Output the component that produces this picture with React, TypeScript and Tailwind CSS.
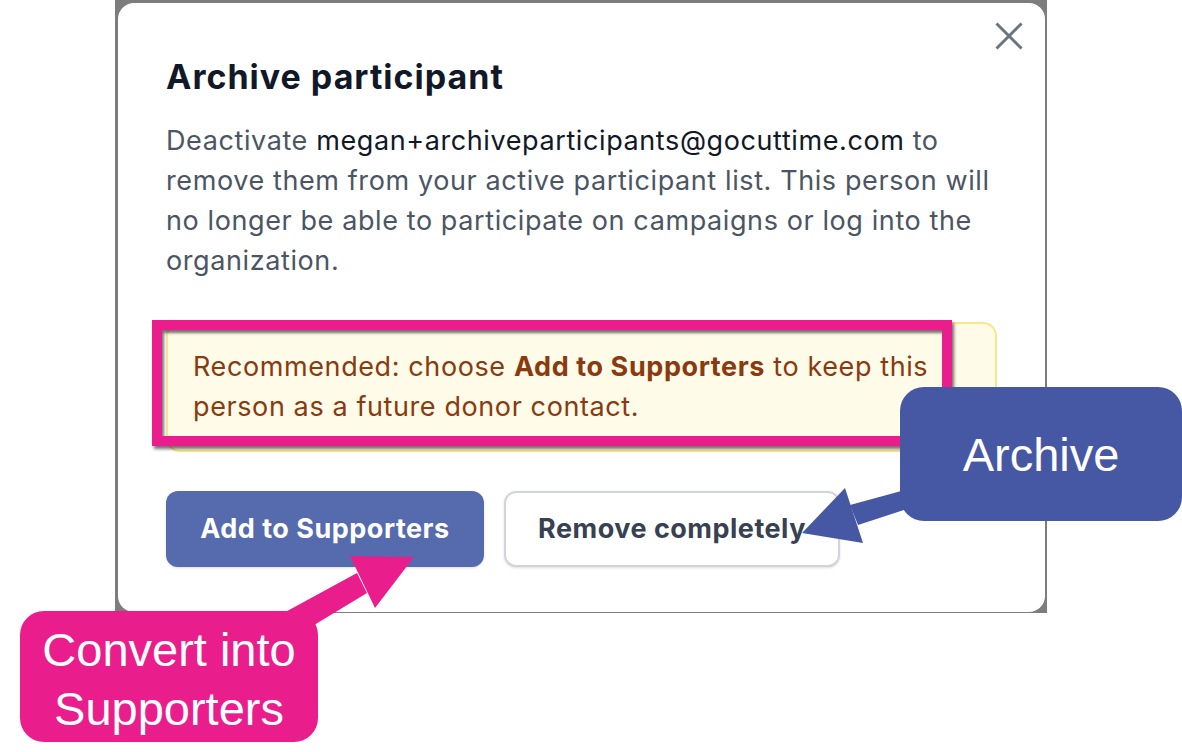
import React from 'react';

const Callout: React.FC<{ className: string; children: React.ReactNode }> = ({ className, children }) => (
  <div
    className={`absolute flex items-center justify-center text-center text-white text-[47px] leading-[59px] font-['Liberation_Sans',Arial,sans-serif] ${className}`}
  >
    {children}
  </div>
);

const App: React.FC = () => {
  return (
    <div className="relative w-[1182px] h-[752px] bg-white overflow-hidden font-['Inter','Noto_Sans',sans-serif]">
      {/* Backdrop with dialog */}
      <div className="ml-[115px] w-[932px] h-[613px] bg-[#7d7d7d] pt-[3px] pl-[3px] pr-[2px] pb-[1px]">
        <div className="relative h-full bg-white rounded-[16px] px-[48px] pt-[54px]">
          <button className="absolute top-[19px] right-[22px] text-[#6b7280]">
            <svg width="28" height="28" viewBox="0 0 28 28" fill="none" stroke="currentColor" strokeWidth="3">
              <path d="M1.5 1.5 L26.5 26.5 M26.5 1.5 L1.5 26.5" />
            </svg>
          </button>

          <h2 className="text-[34px] leading-[40px] tracking-[1px] font-bold text-[#111827] mb-[24px]">
            Archive participant
          </h2>
          <p className="text-[27px] leading-[40px] tracking-[0.6px] text-[#4b5563]">
            Deactivate <span className="text-[#111827]">megan+archiveparticipants@gocuttime.com</span> to remove them
            from your active participant list. This person will no longer be able to participate on campaigns or log
            into the organization.
          </p>

          <div className="mt-[41px] rounded-[14px] border-2 border-[#fde68a] bg-[#fefbe9] px-[25px] py-[23px] text-[27px] leading-[40px] tracking-[0.6px] text-[#8a3a0e]">
            Recommended: choose <span className="font-bold">Add to Supporters</span> to keep this person as a future
            donor contact.
          </div>

          <div className="mt-[39px] flex gap-[20px] text-[27px] tracking-[0.5px] font-bold">
            <button className="w-[318px] h-[76px] flex items-center justify-center rounded-[12px] bg-[#566bad] text-white shadow-sm">
              Add to Supporters
            </button>
            <button className="w-[336px] h-[76px] flex items-center justify-center rounded-[12px] border-2 border-[#d1d5db] bg-white text-[#374151] shadow-sm">
              Remove completely
            </button>
          </div>
        </div>
      </div>

      {/* Highlight around recommendation */}
      <div className="absolute left-[152px] top-[320px] w-[800px] h-[126px] border-[10px] border-[#e91e8c] shadow-[2px_3px_3px_rgba(0,0,0,0.55),inset_2px_3px_3px_rgba(0,0,0,0.55)]" />

      {/* Arrows */}
      <svg className="absolute inset-0" width="1182" height="752" viewBox="0 0 1182 752">
        <polygon points="850,505 905,490 910,508 858,525" fill="#4658a3" />
        <polygon points="802,533 845,488 863,543" fill="#4658a3" />
        <polygon points="278,616 357,573 367,593 296,636" fill="#e91e8c" />
        <polygon points="350,556 414,557 375,608" fill="#e91e8c" />
      </svg>

      <Callout className="left-[900px] top-[387px] w-[282px] h-[134px] rounded-[24px] bg-[#4658a3]">Archive</Callout>
      <Callout className="left-[20px] top-[611px] w-[298px] h-[131px] rounded-[24px] bg-[#e91e8c] pt-[5px]">
        Convert into
        <br />
        Supporters
      </Callout>
    </div>
  );
};

export default App;
